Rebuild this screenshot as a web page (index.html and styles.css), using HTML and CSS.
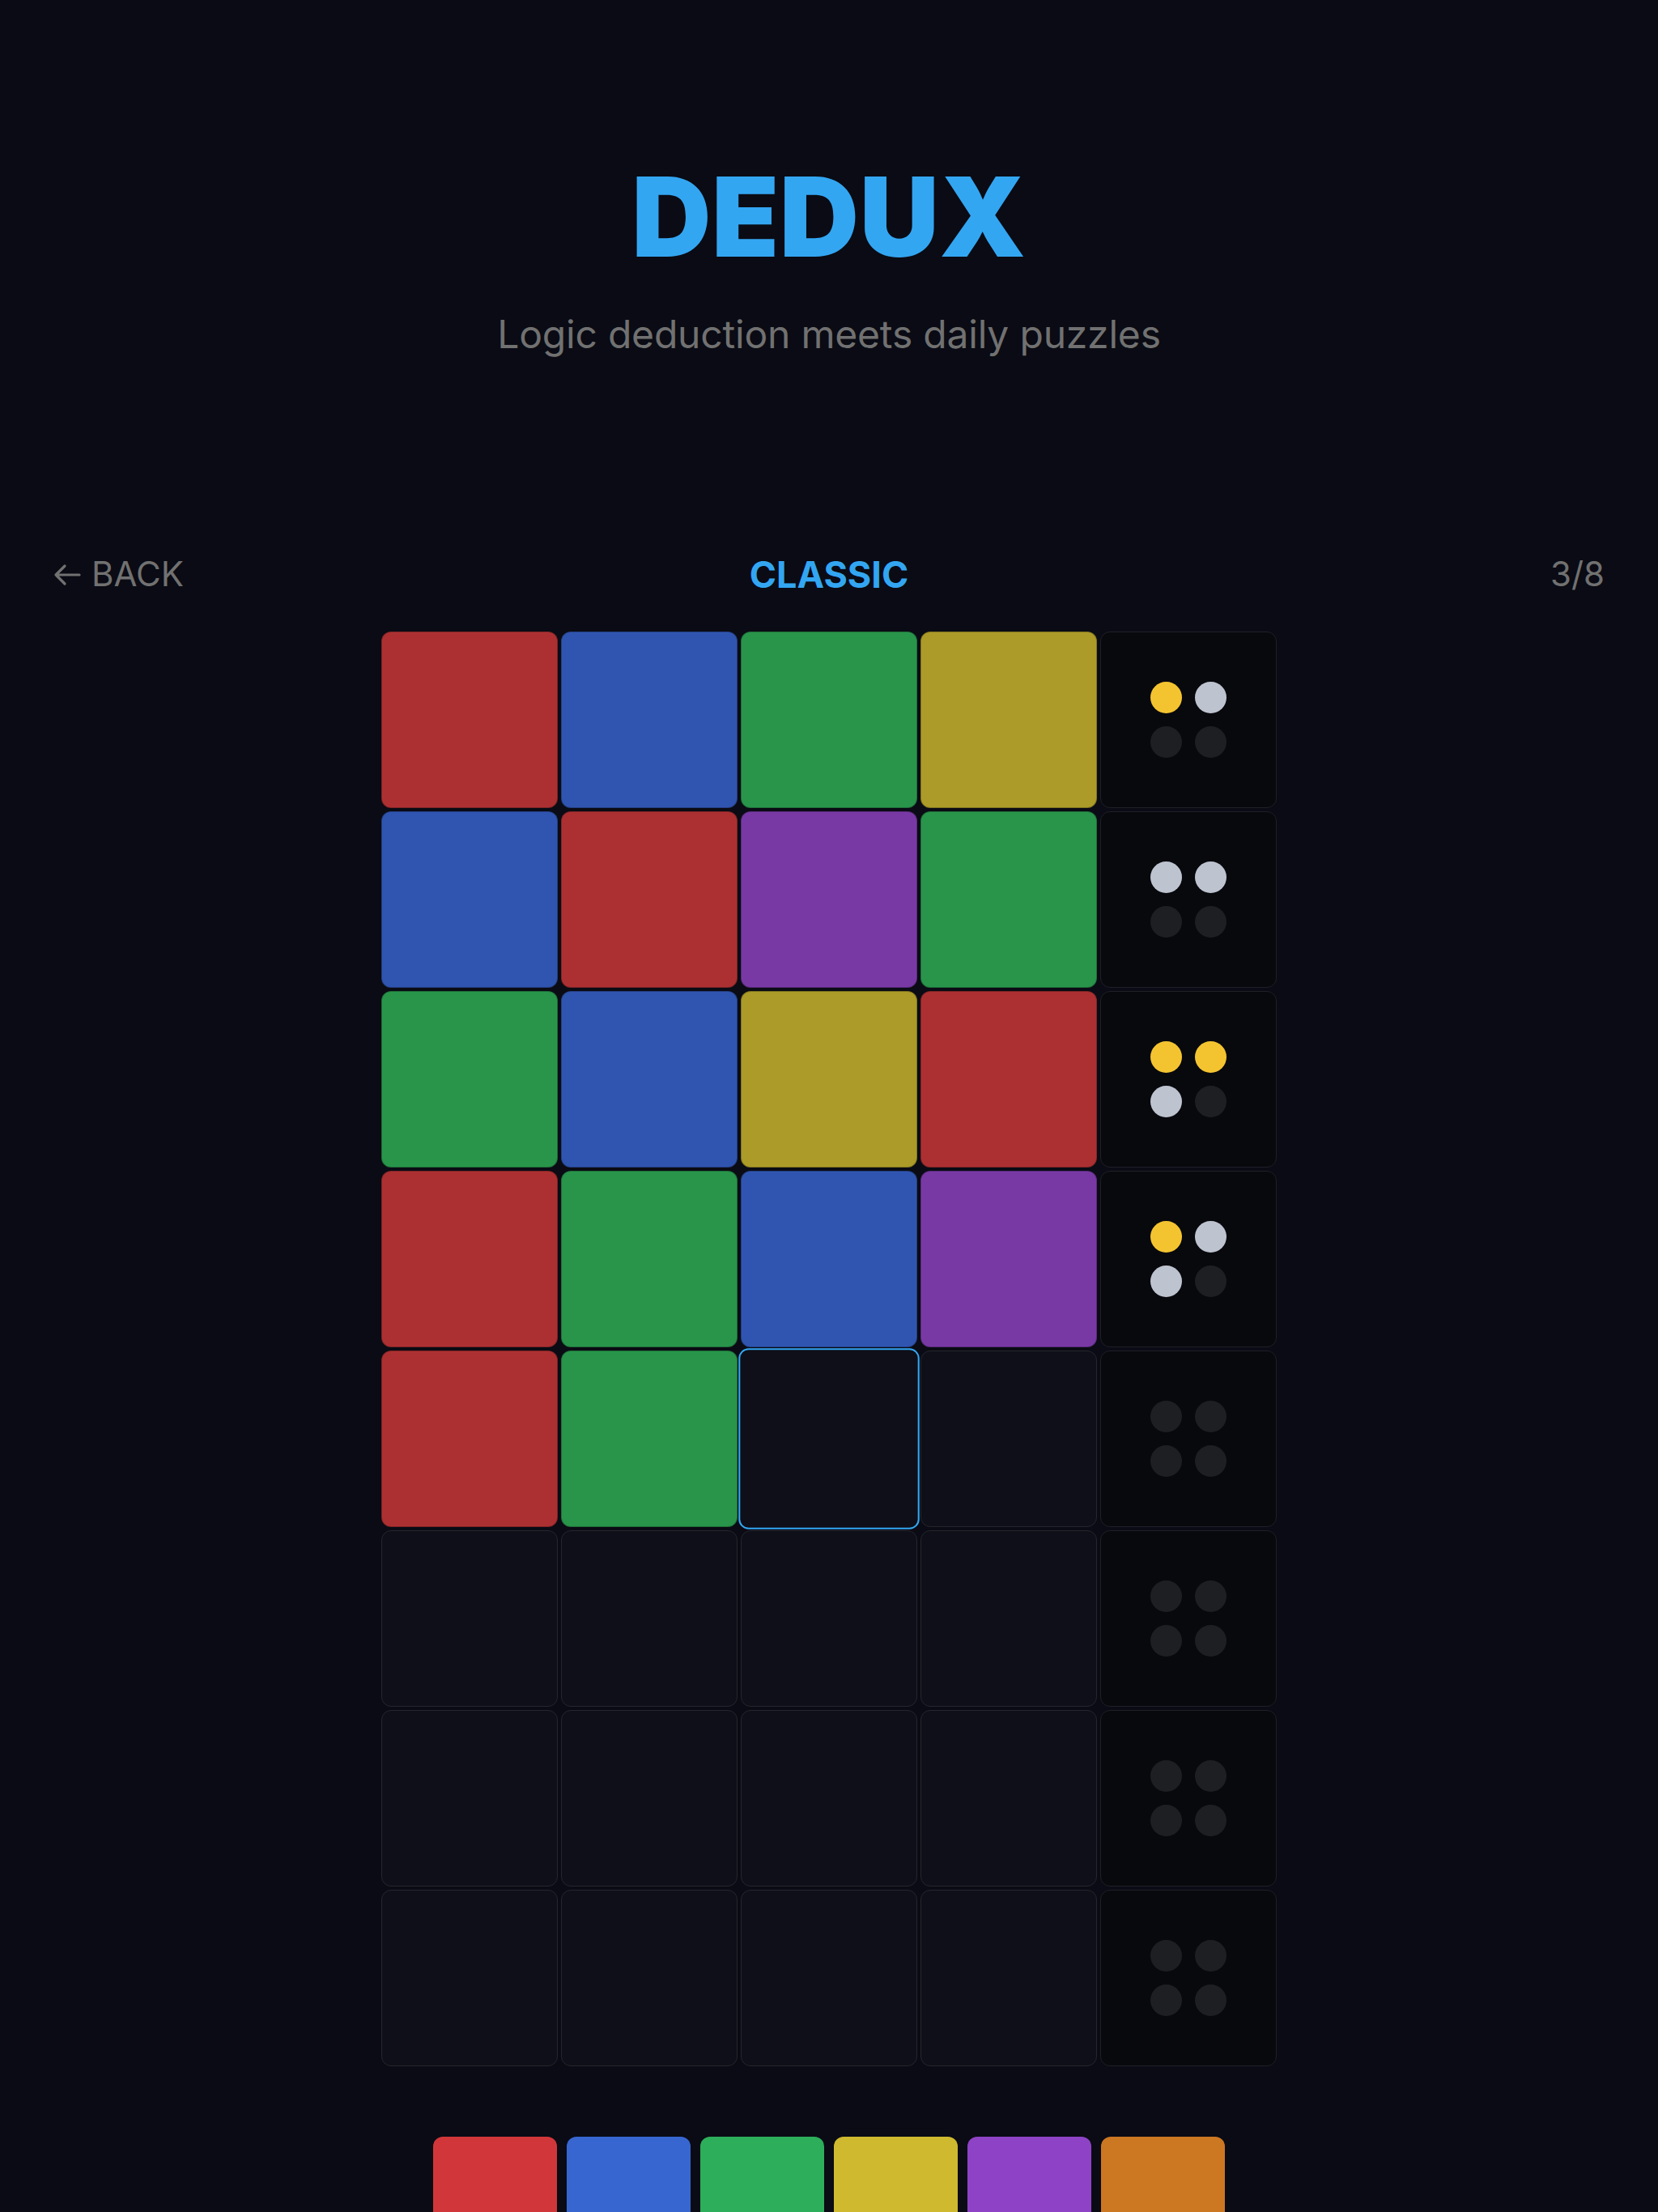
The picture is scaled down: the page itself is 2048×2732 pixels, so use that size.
FILE: index.html
```html
<!DOCTYPE html>
<html lang="en">
<head>
<meta charset="utf-8">
<title>DEDUX</title>
<link rel="stylesheet" href="styles.css">
</head>
<body>
<div class="app">
  <header class="hero">
    <h1 class="title">DEDUX</h1>
    <p class="tagline">Logic deduction meets daily puzzles</p>
  </header>

  <nav class="topbar">
    <button class="back" type="button">
      <svg class="back-icon" viewBox="0 0 34 28" width="34" height="28" aria-hidden="true">
        <path d="M32 14H3M14 3L3 14L14 25" fill="none" stroke="currentColor" stroke-width="3.2" stroke-linecap="round" stroke-linejoin="round"/>
      </svg>
      <span>BACK</span>
    </button>
    <div class="mode">CLASSIC</div>
    <div class="progress">3/8</div>
  </nav>

  <main class="board">
    <div class="cell red"></div><div class="cell blue"></div><div class="cell green"></div><div class="cell yellow"></div>
    <div class="feedback"><i class="peg hit"></i><i class="peg near"></i><i class="peg"></i><i class="peg"></i></div>

    <div class="cell blue"></div><div class="cell red"></div><div class="cell purple"></div><div class="cell green"></div>
    <div class="feedback"><i class="peg near"></i><i class="peg near"></i><i class="peg"></i><i class="peg"></i></div>

    <div class="cell green"></div><div class="cell blue"></div><div class="cell yellow"></div><div class="cell red"></div>
    <div class="feedback"><i class="peg hit"></i><i class="peg hit"></i><i class="peg near"></i><i class="peg"></i></div>

    <div class="cell red"></div><div class="cell green"></div><div class="cell blue"></div><div class="cell purple"></div>
    <div class="feedback"><i class="peg hit"></i><i class="peg near"></i><i class="peg near"></i><i class="peg"></i></div>

    <div class="cell red"></div><div class="cell green"></div><div class="cell empty selected"></div><div class="cell empty"></div>
    <div class="feedback"><i class="peg"></i><i class="peg"></i><i class="peg"></i><i class="peg"></i></div>

    <div class="cell empty"></div><div class="cell empty"></div><div class="cell empty"></div><div class="cell empty"></div>
    <div class="feedback"><i class="peg"></i><i class="peg"></i><i class="peg"></i><i class="peg"></i></div>

    <div class="cell empty"></div><div class="cell empty"></div><div class="cell empty"></div><div class="cell empty"></div>
    <div class="feedback"><i class="peg"></i><i class="peg"></i><i class="peg"></i><i class="peg"></i></div>

    <div class="cell empty"></div><div class="cell empty"></div><div class="cell empty"></div><div class="cell empty"></div>
    <div class="feedback"><i class="peg"></i><i class="peg"></i><i class="peg"></i><i class="peg"></i></div>
  </main>

  <div class="palette">
    <button class="swatch s-red" type="button" aria-label="red"></button>
    <button class="swatch s-blue" type="button" aria-label="blue"></button>
    <button class="swatch s-green" type="button" aria-label="green"></button>
    <button class="swatch s-yellow" type="button" aria-label="yellow"></button>
    <button class="swatch s-purple" type="button" aria-label="purple"></button>
    <button class="swatch s-orange" type="button" aria-label="orange"></button>
  </div>
</div>
</body>
</html>
```

FILE: styles.css
```css
* { box-sizing: border-box; }

html, body {
  margin: 0;
  padding: 0;
  background: #0a0b14;
}

body {
  font-family: Inter, "Noto Sans", "Liberation Sans", sans-serif;
  color: #e6e6ea;
  overflow: hidden;
}

.app {
  display: flex;
  flex-direction: column;
  align-items: center;
}

.hero {
  padding-top: 200px;
  display: flex;
  flex-direction: column;
  align-items: center;
}

.title {
  margin: 0;
  font-size: 136px;
  line-height: 1;
  font-weight: 900;
  color: #33a6f2;
  letter-spacing: 0.5px;
}

.tagline {
  margin: 48px 0 0;
  font-size: 48px;
  line-height: 1.2;
  font-weight: 400;
  color: #717171;
  letter-spacing: -0.2px;
}

.topbar {
  align-self: stretch;
  margin-top: 241px;
  padding: 0 66px;
  display: grid;
  grid-template-columns: 1fr auto 1fr;
  align-items: center;
  font-size: 42px;
  line-height: 1.2;
}

.back {
  justify-self: start;
  display: flex;
  align-items: center;
  gap: 13px;
  padding: 0;
  border: 0;
  background: none;
  font: inherit;
  color: #717171;
}

.back-icon {
  display: block;
}

.mode {
  font-weight: 700;
  color: #33a6f2;
  font-size: 45px;
}

.progress {
  justify-self: end;
  color: #717171;
}

.board {
  margin-top: 43px;
  display: grid;
  grid-template-columns: repeat(5, 218px);
  grid-auto-rows: 218px;
  gap: 4px;
}

.cell {
  border-radius: 12px;
  border: 1px solid rgba(0, 0, 0, 0.25);
}

.cell.red { background: #ac3032; }
.cell.blue { background: #3055b0; }
.cell.green { background: #28954b; }
.cell.yellow { background: #ac9b28; }
.cell.purple { background: #7839a5; }

.cell.empty {
  background: #0e0f18;
  border: 1px solid #25262d;
}

.cell.selected {
  border: 2px solid #33a6f2;
  transform: scale(1.025);
}

.feedback {
  border-radius: 12px;
  background: #08090d;
  border: 1px solid #1f2027;
  display: grid;
  grid-template-columns: repeat(2, 39px);
  grid-auto-rows: 39px;
  gap: 16px;
  justify-content: center;
  align-content: center;
}

.peg {
  display: block;
  border-radius: 50%;
  background: #1e1f23;
}

.peg.hit { background: #f4c430; }
.peg.near { background: #bec3d0; }

.palette {
  margin-top: 87px;
  display: flex;
  gap: 12px;
}

.swatch {
  width: 153px;
  height: 153px;
  border: 0;
  padding: 0;
  border-radius: 12px;
}

.s-red { background: #d1373a; }
.s-blue { background: #3866d1; }
.s-green { background: #2dae5a; }
.s-yellow { background: #cfb92f; }
.s-purple { background: #8e43c6; }
.s-orange { background: #cc7722; }
```
